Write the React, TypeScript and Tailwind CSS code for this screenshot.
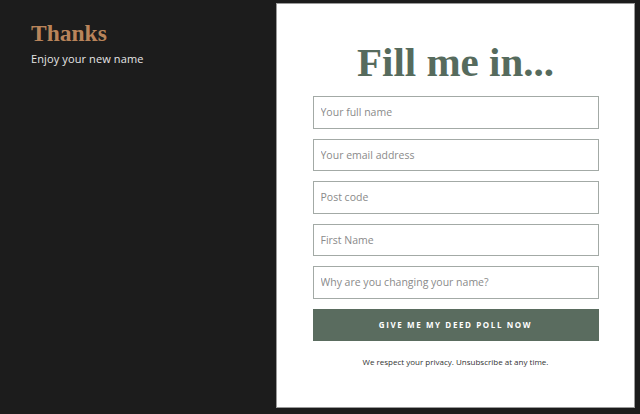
const fields = [
  "Your full name",
  "Your email address",
  "Post code",
  "First Name",
  "Why are you changing your name?",
];

export default function App() {
  return (
    <div className="flex h-[414px] w-[640px] bg-[#1c1c1c] font-['Open_Sans',sans-serif]">
      <div className="flex-1 pl-[31px] pt-[18px]">
        <h2 className="font-['Liberation_Serif',serif] text-[23.5px] font-bold leading-[30px] text-[#b9845a]">
          Thanks
        </h2>
        <p className="mt-[3px] text-[11px] tracking-[0.01em] text-[#e6e6e6]">Enjoy your new name</p>
      </div>
      <div className="mb-[6px] mr-[5px] mt-[3px] flex w-[359px] flex-col items-center border border-[#9a9a9a] bg-white pt-[36px]">
        <h1 className="font-['Liberation_Serif',serif] text-[41px] font-bold leading-[44px] text-[#566b5d]">
          Fill me in...
        </h1>
        <form className="mt-[12px] flex w-[286px] flex-col gap-[10px]">
          {fields.map((f) => (
            <input
              key={f}
              placeholder={f}
              className="h-[32.5px] border border-[#a3aaa6] px-[7px] text-[10.5px] text-[#555] placeholder:text-[#8a8a8a] outline-none"
            />
          ))}
          <button
            type="button"
            className="h-[32px] bg-[#5a6c5f] text-[8px] font-bold tracking-[0.2em] text-white"
          >
            GIVE ME MY DEED POLL NOW
          </button>
        </form>
        <p className="mt-[15px] text-[8px] text-[#333]">
          We respect your privacy. Unsubscribe at any time.
        </p>
      </div>
    </div>
  );
}
